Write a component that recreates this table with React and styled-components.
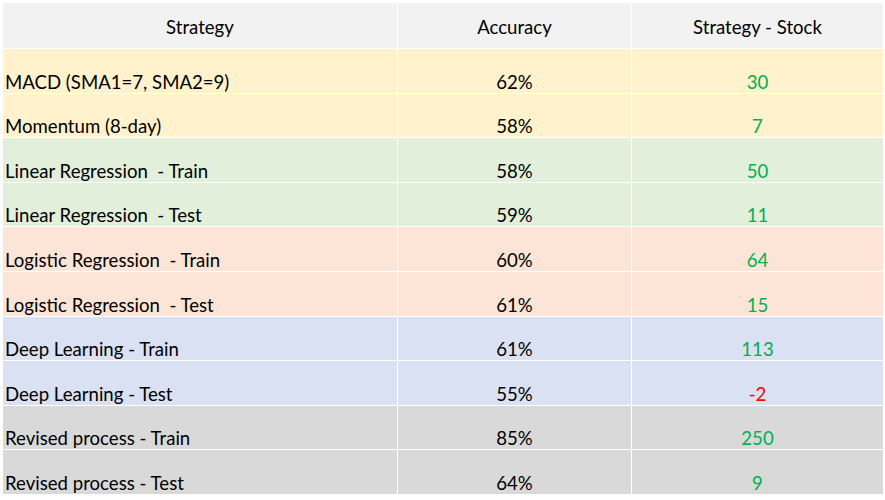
import styled, { createGlobalStyle } from "styled-components";

const GlobalStyle = createGlobalStyle`
  html, body {
    margin: 0;
    padding: 0;
    background: #ffffff;
  }
  body {
    font-family: "Lato", "Liberation Sans", sans-serif;
  }
`;

const Page = styled.div`
  width: 885px;
  height: 500px;
  padding: 3px 0 0 3px;
  box-sizing: border-box;
  background: #ffffff;
`;

const Table = styled.div`
  display: grid;
  grid-template-columns: 394px 233px 251px;
  grid-template-rows: 45px;
  grid-auto-rows: 43.6px;
  column-gap: 1px;
  row-gap: 1px;
  width: 880px;
  background: #ffffff;
`;

const HeadCell = styled.div`
  background: #f2f2f2;
  display: flex;
  align-items: center;
  justify-content: center;
  font-size: 18.6px;
  color: #000000;
  padding-top: 2px;
  box-sizing: border-box;
`;

const Cell = styled.div`
  background: ${({ bg }) => bg};
  display: flex;
  align-items: flex-end;
  justify-content: ${({ align }) => (align === "left" ? "flex-start" : "center")};
  padding: 0 0 0 ${({ align }) => (align === "left" ? "2px" : "0")};
  box-sizing: border-box;
  font-size: 18.6px;
  line-height: 22px;
  color: ${({ color }) => color || "#000000"};
  white-space: pre;
`;

const COLORS = {
  yellow: "#fff2cc",
  green: "#e2efda",
  orange: "#fce4d6",
  blue: "#d9e1f2",
  gray: "#d9d9d9",
};

const rows = [
  { name: "MACD (SMA1=7, SMA2=9)", acc: "62%", diff: 30, bg: COLORS.yellow },
  { name: "Momentum (8-day)", acc: "58%", diff: 7, bg: COLORS.yellow },
  { name: "Linear Regression  - Train", acc: "58%", diff: 50, bg: COLORS.green },
  { name: "Linear Regression  - Test", acc: "59%", diff: 11, bg: COLORS.green },
  { name: "Logistic Regression  - Train", acc: "60%", diff: 64, bg: COLORS.orange },
  { name: "Logistic Regression  - Test", acc: "61%", diff: 15, bg: COLORS.orange },
  { name: "Deep Learning - Train", acc: "61%", diff: 113, bg: COLORS.blue },
  { name: "Deep Learning - Test", acc: "55%", diff: -2, bg: COLORS.blue },
  { name: "Revised process - Train", acc: "85%", diff: 250, bg: COLORS.gray },
  { name: "Revised process - Test", acc: "64%", diff: 9, bg: COLORS.gray },
];

export default function App() {
  return (
    <Page>
      <GlobalStyle />
      <Table>
        <HeadCell>Strategy</HeadCell>
        <HeadCell>Accuracy</HeadCell>
        <HeadCell>Strategy - Stock</HeadCell>
        {rows.map((r) => [
          <Cell key={r.name + "n"} bg={r.bg} align="left">
            {r.name}
          </Cell>,
          <Cell key={r.name + "a"} bg={r.bg}>
            {r.acc}
          </Cell>,
          <Cell
            key={r.name + "d"}
            bg={r.bg}
            color={r.diff < 0 ? "#ff0000" : "#00b050"}
          >
            {r.diff}
          </Cell>,
        ])}
      </Table>
    </Page>
  );
}
